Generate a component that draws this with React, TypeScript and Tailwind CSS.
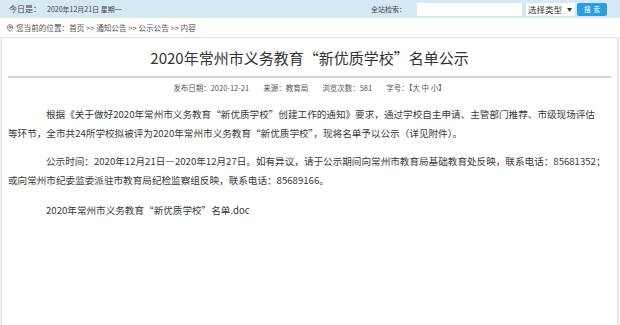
import { MapPin } from "lucide-react";

const font = "font-['SimSun','Noto_Sans_CJK_SC',sans-serif]";

export default function App() {
  return (
    <div className={`w-[620px] h-[325px] overflow-hidden bg-[#efefef] text-[#333] ${font}`} lang="zh-CN">
      {/* top bar */}
      <div className="h-[18px] bg-[#d5e8f6] flex items-center pl-[9px] pr-[13px] text-[8px] text-[#444] whitespace-nowrap">
        <span>今日是：</span>
        <span className="ml-[6px] text-[7px]">2020年12月21日 星期一</span>
        <div className="ml-auto flex items-center">
          <span className="mr-[11px] text-[7px]">全站检索：</span>
          <input className="w-[105px] h-[13px] bg-white outline-none border-0" />
          <div className="ml-[4px] w-[49px] h-[13px] bg-white flex items-center pl-[2px] text-[8.5px] text-[#333]">
            选择类型<span className="ml-[5px] text-[5px]">▼</span>
          </div>
          <button className="ml-[2px] w-[30px] h-[13px] rounded-[2px] bg-[#2b9de5] text-white text-[6.5px] leading-[13px] tracking-[3px] pl-[3px]">搜索</button>
        </div>
      </div>
      {/* breadcrumb */}
      <div className="h-[19px] bg-white flex items-center pl-[6px] text-[7.6px] text-[#555] whitespace-nowrap">
        <MapPin className="w-[8px] h-[8px] text-[#666]" strokeWidth={2.4} />
        <span className="ml-[2px]">您当前的位置：首页 &gt;&gt; 通知公告 &gt;&gt; 公示公告 &gt;&gt; 内容</span>
      </div>
      {/* content */}
      <div className="ml-[1px] w-[617px] h-[300px] bg-white border border-[#e3e3e3]">
        <div className="mx-[6px] h-[40px] border-b-2 border-[#d4d4d4] flex items-center justify-center">
          <h1 className="text-[15px] text-[#333] pt-[2px]">2020年常州市义务教育“新优质学校”名单公示</h1>
        </div>
        <div className="h-[20px] flex items-center justify-center text-[7.5px] text-[#555] gap-[14px] whitespace-nowrap">
          <span>发布日期：2020-12-21</span>
          <span>来源：教育局</span>
          <span>浏览次数：581</span>
          <span>字号：【大 中 小】</span>
        </div>
        <div className="pl-[6px] pt-[7px] text-[9.6px] leading-[19px] text-[#3a3a3a] whitespace-nowrap">
          <p className="pl-[38px]">
            根据《关于做好2020年常州市义务教育“新优质学校”创建工作的通知》要求，通过学校自主申请、主管部门推荐、市级现场评估
          </p>
          <p>等环节，全市共24所学校拟被评为2020年常州市义务教育“新优质学校”，现将名单予以公示（详见附件）。</p>
          <p className="pl-[38px] mt-[9px]">
            公示时间：2020年12月21日—2020年12月27日。如有异议，请于公示期间向常州市教育局基础教育处反映，联系电话：85681352；
          </p>
          <p>或向常州市纪委监委派驻市教育局纪检监察组反映，联系电话：85689166。</p>
          <p className="pl-[38px] mt-[11px]">2020年常州市义务教育“新优质学校”名单.doc</p>
        </div>
      </div>
    </div>
  );
}
